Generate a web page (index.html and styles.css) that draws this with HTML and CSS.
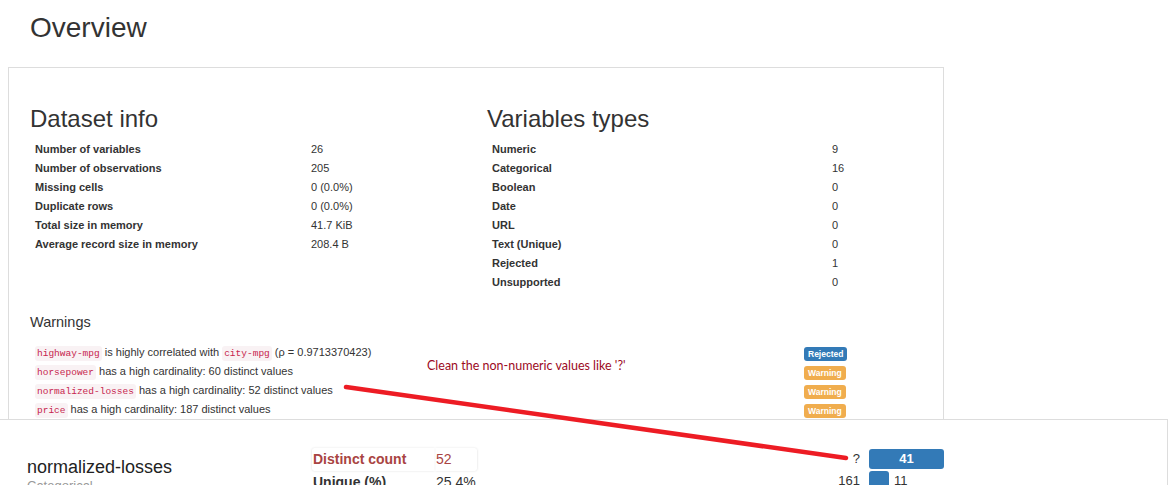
FILE: index.html
```html
<!DOCTYPE html>
<html lang="en">
<head>
<meta charset="utf-8">
<title>Overview</title>
<link rel="stylesheet" href="styles.css">
</head>
<body>
<div class="page">
  <h1 class="page-title">Overview</h1>

  <section class="overview">
    <div class="info-grid">
      <div class="info-col">
        <h2 class="section-title">Dataset info</h2>
        <table class="stats stats-dataset">
          <tr><th>Number of variables</th><td>26</td></tr>
          <tr><th>Number of observations</th><td>205</td></tr>
          <tr><th>Missing cells</th><td>0 (0.0%)</td></tr>
          <tr><th>Duplicate rows</th><td>0 (0.0%)</td></tr>
          <tr><th>Total size in memory</th><td>41.7 KiB</td></tr>
          <tr><th>Average record size in memory</th><td>208.4 B</td></tr>
        </table>
      </div>
      <div class="info-col">
        <h2 class="section-title">Variables types</h2>
        <table class="stats stats-types">
          <tr><th>Numeric</th><td>9</td></tr>
          <tr><th>Categorical</th><td>16</td></tr>
          <tr><th>Boolean</th><td>0</td></tr>
          <tr><th>Date</th><td>0</td></tr>
          <tr><th>URL</th><td>0</td></tr>
          <tr><th>Text (Unique)</th><td>0</td></tr>
          <tr><th>Rejected</th><td>1</td></tr>
          <tr><th>Unsupported</th><td>0</td></tr>
        </table>
      </div>
    </div>

    <h3 class="warnings-title">Warnings</h3>
    <table class="warnings">
      <tr>
        <td class="msg"><code>highway-mpg</code> is highly correlated with <code>city-mpg</code> (ρ = 0.9713370423)</td>
        <td class="tag"><span class="badge badge-rejected">Rejected</span></td>
      </tr>
      <tr>
        <td class="msg"><code>horsepower</code> has a high cardinality: 60 distinct values</td>
        <td class="tag"><span class="badge badge-warning">Warning</span></td>
      </tr>
      <tr>
        <td class="msg"><code>normalized-losses</code> has a high cardinality: 52 distinct values</td>
        <td class="tag"><span class="badge badge-warning">Warning</span></td>
      </tr>
      <tr>
        <td class="msg"><code>price</code> has a high cardinality: 187 distinct values</td>
        <td class="tag"><span class="badge badge-warning">Warning</span></td>
      </tr>
    </table>
  </section>

  <section class="variable">
    <div class="var-name">
      <p class="name">normalized-losses</p>
      <p class="type">Categorical</p>
    </div>
    <table class="var-stats">
      <tr class="alert-row"><th>Distinct count</th><td>52</td></tr>
      <tr><th>Unique (%)</th><td>25.4%</td></tr>
    </table>
    <table class="freq">
      <tr>
        <td class="freq-label">?</td>
        <td class="freq-bar-cell"><span class="bar bar-wide">41</span></td>
      </tr>
      <tr>
        <td class="freq-label">161</td>
        <td class="freq-bar-cell"><span class="bar bar-narrow"></span><span class="bar-count">11</span></td>
      </tr>
    </table>
  </section>

  <svg class="annot-line" width="1173" height="485" viewBox="0 0 1173 485">
    <line x1="346" y1="387" x2="846" y2="458" stroke="#ed1c24" stroke-width="4.5" stroke-linecap="round"/>
  </svg>
  <p class="annot-text">Clean the non-numeric values like '?'</p>
</div>
</body>
</html>
```

FILE: styles.css
```css
html, body {
  margin: 0;
  padding: 0;
  overflow: hidden;
  background: #fff;
}

body {
  font-family: "Liberation Sans", Arial, Helvetica, sans-serif;
  color: #333;
}

.page {
  position: relative;
  width: 1173px;
  height: 485px;
}

.page-title {
  margin: 0;
  padding: 12px 0 0 30px;
  height: 31px;
  font-size: 28px;
  line-height: 31px;
  font-weight: normal;
  color: #333;
}

.overview {
  box-sizing: border-box;
  margin: 24px 0 0 8px;
  width: 936px;
  height: 352px;
  border: 1px solid #ddd;
  border-bottom: none;
  padding: 38px 0 0 21px;
  overflow: hidden;
}

.info-grid {
  display: grid;
  grid-template-columns: 457px 1fr;
}

.section-title {
  margin: 0;
  font-size: 24px;
  line-height: 26px;
  font-weight: normal;
  color: #333;
}

.stats {
  border-collapse: collapse;
  margin-top: 7.7px;
  font-size: 11px;
}

.stats th,
.stats td {
  padding: 0 5px;
  height: 19px;
  line-height: 19px;
  text-align: left;
  vertical-align: middle;
  white-space: nowrap;
}

.stats th {
  font-weight: bold;
  color: #333;
}

.stats td {
  color: #333;
}

.stats-dataset th {
  width: 266px;
}

.stats-types th {
  width: 330px;
}

.warnings-title {
  margin: 22.6px 0 0 0;
  font-size: 14.5px;
  line-height: 16px;
  font-weight: normal;
  color: #333;
}

.warnings {
  border-collapse: collapse;
  margin-top: 12.4px;
  font-size: 11px;
}

.warnings td {
  padding: 0 5px;
  height: 19px;
  line-height: 19px;
  white-space: nowrap;
  vertical-align: middle;
}

.warnings .msg {
  width: 759px;
}

code {
  font-family: "Liberation Mono", "DejaVu Sans Mono", monospace;
  font-size: 9.5px;
  line-height: 1;
  color: #c7254e;
  background: #f9f2f4;
  border-radius: 3px;
  padding: 2px 2px;
}

.badge {
  display: inline-block;
  font-size: 8.5px;
  font-weight: bold;
  color: #fff;
  line-height: 9px;
  padding: 2.5px 4px 2.5px 4px;
  border-radius: 3px;
  vertical-align: -1px;
}

.badge-rejected {
  background: #337ab7;
}

.badge-warning {
  background: #f0ad4e;
}

.variable {
  box-sizing: border-box;
  width: 1168px;
  height: 200px;
  border-top: 1px solid #ddd;
  border-right: 1px solid #ddd;
  padding: 28px 0 0 27px;
  display: flex;
  align-items: flex-start;
  background: #fff;
}

.var-name {
  width: 285px;
  margin-top: 9px;
}

.var-name .name {
  margin: 0;
  font-size: 18px;
  line-height: 20px;
  color: #222;
}

.var-name .type {
  margin: 1px 0 0 0;
  font-size: 13px;
  line-height: 15px;
  color: #999;
}

.var-stats {
  width: 165px;
  border-collapse: separate;
  border-spacing: 0;
  font-size: 14px;
}

.var-stats th,
.var-stats td {
  padding: 1.3px 0 1.3px 1px;
  line-height: 20px;
  text-align: left;
  white-space: nowrap;
}

.var-stats th {
  width: 122px;
  font-weight: bold;
  color: #333;
}

.var-stats .alert-row th,
.var-stats .alert-row td {
  color: #a94442;
}

.var-stats .alert-row th {
  box-shadow: -1px 0 2px rgba(0, 0, 0, 0.05), 0 1px 2px rgba(0, 0, 0, 0.04), 0 -1px 2px rgba(0, 0, 0, 0.03);
  border-radius: 3px 0 0 3px;
}

.var-stats .alert-row td {
  box-shadow: 1px 0 2px rgba(0, 0, 0, 0.05), 0 1px 2px rgba(0, 0, 0, 0.04), 0 -1px 2px rgba(0, 0, 0, 0.03);
  border-radius: 0 3px 3px 0;
}

.var-stats td {
  font-weight: normal;
}

.freq {
  margin-left: 323px;
  border-collapse: collapse;
  font-size: 13px;
}

.freq td {
  padding: 1px 0;
  line-height: 20px;
  white-space: nowrap;
}

.freq .freq-label {
  width: 60px;
  padding-right: 9px;
  text-align: right;
  color: #333;
}

.bar {
  display: inline-block;
  height: 20px;
  line-height: 20px;
  vertical-align: top;
  background: #337ab7;
  border-radius: 3px;
  color: #fff;
  font-weight: bold;
  text-align: center;
}

.bar-wide {
  width: 75px;
}

.bar-narrow {
  width: 20px;
}

.bar-count {
  display: inline-block;
  margin-left: 5px;
  line-height: 20px;
  vertical-align: top;
  color: #333;
}

.annot-line {
  position: absolute;
  left: 0;
  top: 0;
  pointer-events: none;
}

.annot-text {
  position: absolute;
  left: 427px;
  top: 358px;
  margin: 0;
  font-family: Lato, "Open Sans", sans-serif;
  font-size: 12.5px;
  line-height: 15px;
  color: #9c0a1e;
}
```
